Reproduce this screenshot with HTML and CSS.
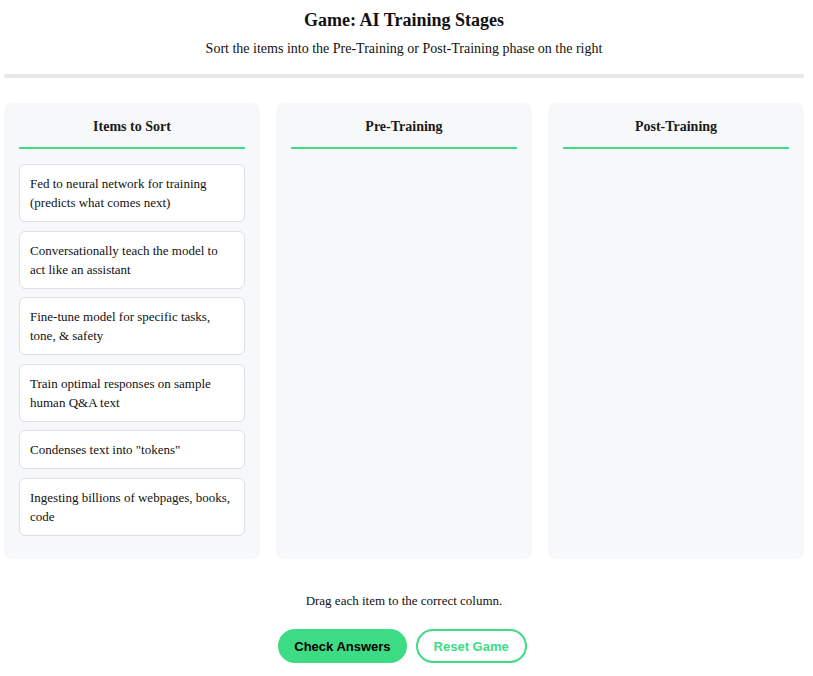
FILE: index.html
```html
<!DOCTYPE html>
<html>
<head>
<meta charset="utf-8">
<link rel="stylesheet" href="styles.css">
</head>
<body>
<div class="page">
  <header class="intro">
    <h1 class="title">Game: AI Training Stages</h1>
    <p class="subtitle">Sort the items into the Pre-Training or Post-Training phase on the right</p>
  </header>
  <div class="progress"></div>
  <div class="board">
    <section class="column">
      <h2 class="col-title">Items to Sort</h2>
      <div class="item">Fed to neural network for training (predicts what comes next)</div>
      <div class="item">Conversationally teach the model to act like an assistant</div>
      <div class="item">Fine-tune model for specific tasks, tone, &amp; safety</div>
      <div class="item">Train optimal responses on sample human Q&amp;A text</div>
      <div class="item">Condenses text into "tokens"</div>
      <div class="item">Ingesting billions of webpages, books, code</div>
    </section>
    <section class="column">
      <h2 class="col-title">Pre-Training</h2>
    </section>
    <section class="column">
      <h2 class="col-title">Post-Training</h2>
    </section>
  </div>
  <p class="hint">Drag each item to the correct column.</p>
  <div class="actions">
    <button class="btn btn-primary">Check Answers</button>
    <button class="btn btn-outline">Reset Game</button>
  </div>
</div>
</body>
</html>
```
FILE: styles.css
```css
html, body {
  margin: 0;
  padding: 0;
  background: #ffffff;
}
body {
  font-family: "Liberation Serif", "Times New Roman", serif;
  color: #111111;
}
.page {
  width: 800px;
  padding: 0 0 0 4px;
}
.intro {
  text-align: center;
  padding-top: 10px;
}
.title {
  font-size: 18px;
  font-weight: bold;
  margin: 0;
  line-height: 21px;
}
.subtitle {
  font-size: 14px;
  margin: 9px 0 0;
  line-height: 18px;
}
.progress {
  margin-top: 16px;
  height: 4px;
  border-radius: 2px;
  background: #e5e7eb;
}
.board {
  margin-top: 25px;
  display: grid;
  grid-template-columns: repeat(3, 1fr);
  gap: 16px;
}
.column {
  background: #f7f8fa;
  border-radius: 8px;
  padding: 15px 15px 15px;
  min-height: 200px;
}
.col-title {
  margin: 0 0 15px;
  font-size: 14px;
  font-weight: bold;
  text-align: center;
  line-height: 18px;
  padding-bottom: 11px;
  border-bottom: 2px solid #3ddc84;
  color: #1a1a1a;
}
.item {
  background: #ffffff;
  border: 1px solid #dcdfe4;
  border-radius: 6px;
  padding: 9px 10px;
  font-size: 13px;
  line-height: 19px;
  margin-bottom: 8.5px;
  color: #111111;
}
.hint {
  text-align: center;
  font-size: 13px;
  margin: 33px 0 0;
  line-height: 17px;
}
.actions {
  display: flex;
  justify-content: center;
  gap: 9px;
  margin-top: 20px;
  padding-right: 3px;
}
.btn {
  font-family: "Liberation Sans", Arial, sans-serif;
  font-size: 13px;
  font-weight: bold;
  height: 34px;
  padding: 0 14px;
  border-radius: 17px;
  border: 2px solid #3ddc84;
}
.btn-primary {
  background: #3ddc84;
  color: #000000;
}
.btn-outline {
  background: #ffffff;
  color: #3ddc84;
  padding: 0 16px;
}
```
